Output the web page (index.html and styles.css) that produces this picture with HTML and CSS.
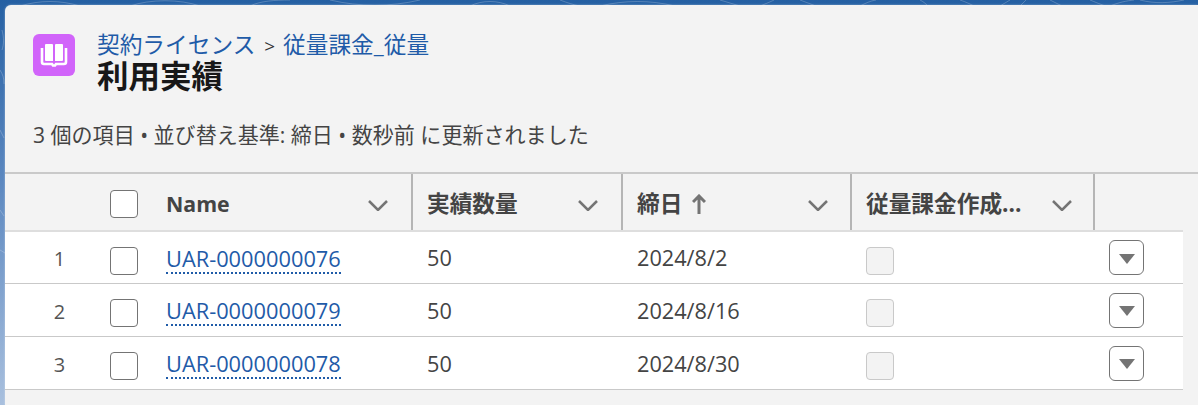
FILE: index.html
```html
<!DOCTYPE html>
<html lang="ja">
<head>
  <meta charset="UTF-8" />
  <title>利用実績</title>
  <link rel="stylesheet" href="styles.css">
</head>
<body>
  <svg class="swirls" viewBox="0 0 1198 405" width="1198" height="405">
    <path d="M20 6C40 0 60 0 80 6M130 6c20-7 50-7 70 0M250 6c10-5 25-6 40-6M330 0c30 7 60 7 90 0M470 6c12-6 28-6 40 0M560 0c8 3 14 5 20 6M600 6c25-6 50-6 75 0M720 0l20 6M760 6c10-4 12-5 14-6M800 0l16 6M860 6c6-3 10-5 16-6M920 0c4 2 6 4 8 6M960 0c6 2 10 4 14 6M1000 6l10-6M1020 6l6-6M1050 0l12 6M1090 0c10 4 12 5 16 6M1110 6c10-4 16-5 24-6M1140 0c15 4 30 3 44 0M2 30c2 8 2 14 0 20M0 70c3 5 4 8 4 14M0 130c2 4 3 6 4 8M0 210l4 6M0 250c2 1 3 2 5 3" />
  </svg>
  <div class="card">
    <div class="page-head">
      <div class="head-icon">
        <svg viewBox="0 0 42 42" width="42" height="42">
          <path d="M13 10h6a1 1 0 0 1 1 1v16h-7a1 1 0 0 1-1-1V11a1 1 0 0 1 1-1zM23 10h6a1 1 0 0 1 1 1v15a1 1 0 0 1-1 1h-7V11a1 1 0 0 1 1-1z" fill="#fff"/>
          <path d="M9 14v14a2 2 0 0 0 2 2h8l1 1.500h2l1-1.500h8a2 2 0 0 0 2-2V14" fill="none" stroke="#fff" stroke-width="2.600"/>
        </svg>
      </div>
      <div class="head-text">
        <div class="crumbs"><a href="#">契約ライセンス</a> <span class="sep">&gt;</span> <a href="#">従量課金_従量</a></div>
        <h1>利用実績</h1>
      </div>
    </div>
    <p class="summary">3 個の項目 • 並び替え基準: 締日 • 数秒前 に更新されました</p>

    <div class="list">
      <div class="row header">
        <div class="cell num"></div>
        <div class="cell check"><span class="box"></span></div>
        <div class="cell name"><b>Name</b><svg class="chev" viewBox="0 0 22 12"><path d="M2 2l9 9 9-9" /></svg></div>
        <div class="cell qty"><b>実績数量</b><svg class="chev" viewBox="0 0 22 12"><path d="M2 2l9 9 9-9" /></svg></div>
        <div class="cell date"><b>締日</b><svg class="arrow" viewBox="0 0 14 20"><path d="M7 20V2M1 8l6-6 6 6" /></svg><svg class="chev" viewBox="0 0 22 12"><path d="M2 2l9 9 9-9" /></svg></div>
        <div class="cell flag"><b>従量課金作成...</b><svg class="chev" viewBox="0 0 22 12"><path d="M2 2l9 9 9-9" /></svg></div>
        <div class="cell act"></div>
      </div>

      <div class="row first">
        <div class="cell num">1</div>
        <div class="cell check"><span class="box"></span></div>
        <div class="cell name"><a href="#">UAR-0000000076</a></div>
        <div class="cell qty">50</div>
        <div class="cell date">2024/8/2</div>
        <div class="cell flag"><span class="box off"></span></div>
        <div class="cell act"><span class="menu-btn"><i></i></span></div>
      </div>
      <div class="row">
        <div class="cell num">2</div>
        <div class="cell check"><span class="box"></span></div>
        <div class="cell name"><a href="#">UAR-0000000079</a></div>
        <div class="cell qty">50</div>
        <div class="cell date">2024/8/16</div>
        <div class="cell flag"><span class="box off"></span></div>
        <div class="cell act"><span class="menu-btn"><i></i></span></div>
      </div>
      <div class="row">
        <div class="cell num">3</div>
        <div class="cell check"><span class="box"></span></div>
        <div class="cell name"><a href="#">UAR-0000000078</a></div>
        <div class="cell qty">50</div>
        <div class="cell date">2024/8/30</div>
        <div class="cell flag"><span class="box off"></span></div>
        <div class="cell act"><span class="menu-btn"><i></i></span></div>
      </div>
    </div>
  </div>
</body>
</html>
```

FILE: styles.css
```css
* {
  margin: 0;
  padding: 0;
  box-sizing: border-box;
  font-family: "Open Sans", "Noto Sans CJK JP", sans-serif;
}

html, body {
  height: 405px;
  overflow: hidden;
}

body {
  background: linear-gradient(180deg, #2560a3 0%, #5c88c0 45%, #a9c0de 100%);
  padding: 5px 0 0 5px;
}

a {
  color: #1f5ba8;
  text-decoration: none;
}

/* faint pattern of the page wallpaper */
.swirls {
  position: absolute;
  top: 0;
  left: 0;
  fill: none;
  stroke: #fff;
  stroke-opacity: 0.22;
}

.card {
  position: relative;
  height: 400px;
  background: #f3f3f3;
  border-top-left-radius: 6px;
  box-shadow: 0 0 2px rgba(255,255,255,0.5);
}

.page-head {
  display: flex;
  gap: 22px;
  padding: 29px 0 0 28px;
}

.head-icon {
  width: 42px;
  height: 42px;
  border-radius: 6px;
  background: #d164fa;
}

.head-icon svg {
  display: block;
}

.head-text {
  margin-top: -4px;
}

.crumbs {
  height: 30px;
  font-size: 22.700px;
  line-height: 30px;
  color: #333;
}

.crumbs .sep {
  font-size: 19px;
  margin: 0 2px 0 3px;
}

h1 {
  font-size: 31.500px;
  line-height: 32px;
  font-weight: 700;
  color: #181818;
}

.summary {
  margin: 30px 0 0 28px;
  font-size: 21.050px;
  line-height: 26px;
  color: #444;
}

.list {
  margin-top: 24px;
  border-top: 2px solid #c9c9c9;
}

.row {
  display: grid;
  grid-template-columns: 95px 52px 259px 210px 229px 243px 90px;
  width: 1178px;
  height: 53px;
  background: #fff;
  border-bottom: 1px solid #c9c9c9;
  align-items: center;
  font-size: 21.700px;
  color: #444;
}

.row.first {
  height: 52px;
}

.row.header {
  height: 58px;
  background: #f3f3f3;
  border-bottom: 2px solid #dedede;
  align-items: stretch;
}

.cell {
  display: flex;
  align-items: center;
  padding-left: 16px;
  position: relative;
}

.num {
  justify-content: center;
  padding: 2px 0 0 14px;
  color: #555;
  font-size: 20px;
}

.check {
  padding-left: 10px;
}

.row .name {
  padding-left: 14px;
}

.header b {
  font-size: 22.700px;
  font-weight: 700;
  color: #444;
}

.header .name b {
  font-size: 21.300px;
  margin-top: 2px;
}

.header .qty, .header .date, .header .flag, .header .act {
  border-left: 2px solid #b5b5b5;
  padding-left: 14px;
  height: 56px;
}

.chev {
  position: absolute;
  top: 25px;
  right: 22px;
  width: 22px;
  height: 12px;
  fill: none;
  stroke: #747474;
  stroke-width: 2.500;
}

.date .chev {
  right: 21px;
}

.flag .chev {
  right: 20px;
}

.arrow {
  width: 14px;
  height: 20px;
  margin: 3px 0 0 10px;
  fill: none;
  stroke: #747474;
  stroke-width: 3;
}

.box {
  display: block;
  width: 28px;
  height: 28px;
  margin-top: 6px;
  background: #fff;
  border: 1px solid #747474;
  border-radius: 4px;
}

.header .box {
  margin-top: 3px;
}

.box.off {
  background: #f3f3f3;
  border-color: #c9c9c9;
}

.name a {
  border-bottom: 2px dotted #1f5ba8;
  font-size: 21.800px;
  line-height: 26px;
  margin-top: 4px;
}

.menu-btn {
  width: 35px;
  height: 35px;
  background: #fff;
  border: 1px solid #747474;
  border-radius: 6px;
  display: flex;
  align-items: center;
  justify-content: center;
}

.menu-btn i {
  width: 0;
  height: 0;
  margin-top: 2px;
  border-left: 8px solid transparent;
  border-right: 8px solid transparent;
  border-top: 10px solid #747474;
}
```
